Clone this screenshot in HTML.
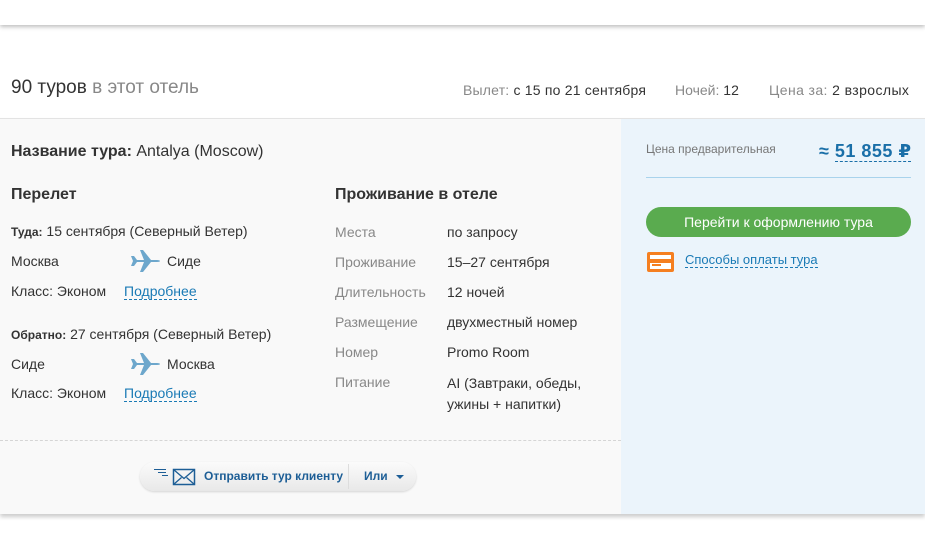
<!DOCTYPE html>
<html><head><meta charset="utf-8"><style>
*{margin:0;padding:0;box-sizing:border-box}
body{width:925px;height:534px;background:#fff;font-family:"Liberation Sans","DejaVu Sans",sans-serif;color:#333;position:relative;overflow:hidden}
.topbar{position:absolute;left:0;top:0;width:925px;height:25px;background:#fff;box-shadow:0 2px 4px rgba(0,0,0,.25)}
.a{position:absolute;white-space:nowrap}
.g{color:#888}
.card{position:absolute;left:0;top:118px;width:925px;height:396px;background:#f9f9f9;border-top:1px solid #e3e3e3;box-shadow:0 3px 4px rgba(0,0,0,.2)}
.right{position:absolute;left:621px;top:0;width:304px;height:395px;background:#ebf4fb}
.lnk{color:#1a7ab5;border-bottom:1px dashed #1a7ab5;line-height:15px}
</style></head><body>
<div class="topbar"></div>
<div class="a" style="left:11px;top:77px;font-size:19px">90 туров <span class="g">в этот отель</span></div>
<div class="a" style="left:463px;top:82px;font-size:14px;letter-spacing:.2px"><span class="g">Вылет:</span> с 15 по 21 сентября</div>
<div class="a" style="left:675px;top:82px;font-size:14px"><span class="g">Ночей:</span> 12</div>
<div class="a" style="left:769px;top:82px;font-size:14px;letter-spacing:.4px"><span class="g">Цена за:</span> 2 взрослых</div>
<div class="card">
<div class="right">
 <div class="a" style="left:25px;top:23px;font-size:12px;color:#777">Цена предварительная</div>
 <div class="a" style="left:198px;top:22px;font-size:18px;font-weight:bold;color:#1a6fa8;letter-spacing:.5px">≈ <span style="border-bottom:1px dashed #1a6fa8">51 855 ₽</span></div>
 <div class="a" style="left:25px;top:58px;width:265px;height:1px;background:#a9d3ec"></div>
 <div class="a" style="left:25px;top:88px;width:265px;height:30px;border-radius:15px;background:#5aab4f;color:#fff;font-size:14px;text-align:center;line-height:30px">Перейти к оформлению тура</div>
 <div class="a" style="left:26px;top:133px;width:27px;height:20px;background:#f57f20;border-radius:2px"><div style="position:absolute;left:3px;top:3px;width:21px;height:4px;background:#fff"></div><div style="position:absolute;left:3px;top:11px;width:21px;height:6px;background:#fff"></div><div style="position:absolute;left:5px;top:12px;width:9px;height:2px;background:#f57f20"></div></div>
 <div class="a lnk" style="left:64px;top:133px;font-size:13px">Способы оплаты тура</div>
</div>
<div class="a" style="left:11px;top:24px;font-size:16px"><b>Название тура:</b> Antalya (Moscow)</div>
<div class="a" style="left:11px;top:67px;font-size:16px;font-weight:bold">Перелет</div>
<div class="a" style="left:11px;top:104px;font-size:14px"><b style="font-size:12px">Туда:</b> 15 сентября (Северный Ветер)</div>
<div class="a" style="left:11px;top:134px;font-size:14px">Москва</div>
<svg class="a" style="left:130px;top:130px" width="30" height="24" viewBox="0 0 30 24"><path fill="#6da7cc" d="M1 7h3l3 4h7L10 1h3l8 10h6c2 0 3 .5 3 1s-1 1-3 1h-6l-8 10h-3l4-10H7l-3 4H1l2-5z"/></svg>
<div class="a" style="left:167px;top:134px;font-size:14px">Сиде</div>
<div class="a" style="left:11px;top:164px;font-size:14px">Класс: Эконом</div>
<div class="a lnk" style="left:124px;top:165px;font-size:14px">Подробнее</div>
<div class="a" style="left:11px;top:207px;font-size:14px"><b style="font-size:12px">Обратно:</b> 27 сентября (Северный Ветер)</div>
<div class="a" style="left:11px;top:237px;font-size:14px">Сиде</div>
<svg class="a" style="left:130px;top:233px" width="30" height="24" viewBox="0 0 30 24"><path fill="#6da7cc" d="M1 7h3l3 4h7L10 1h3l8 10h6c2 0 3 .5 3 1s-1 1-3 1h-6l-8 10h-3l4-10H7l-3 4H1l2-5z"/></svg>
<div class="a" style="left:167px;top:237px;font-size:14px">Москва</div>
<div class="a" style="left:11px;top:266px;font-size:14px">Класс: Эконом</div>
<div class="a lnk" style="left:124px;top:267px;font-size:14px">Подробнее</div>
<div class="a" style="left:335px;top:67px;font-size:16px;font-weight:bold">Проживание в отеле</div>
<div class="a g" style="left:335px;top:98px;font-size:14px;line-height:30px">Места<br>Проживание<br>Длительность<br>Размещение<br>Номер<br>Питание</div>
<div class="a" style="left:447px;top:98px;font-size:14px;line-height:30px">по запросу<br>15–27 сентября<br>12 ночей<br>двухместный номер<br>Promo Room</div>
<div class="a" style="left:447px;top:254px;font-size:14px;line-height:21px">AI (Завтраки, обеды,<br>ужины + напитки)</div>
<div class="a" style="left:0;top:321px;width:621px;border-top:1px dashed #d5d5d5"></div>
<div class="a" style="left:140px;top:343px;width:276px;height:29px;border-radius:15px;background:linear-gradient(#fbfbfb,#e8e8e8);box-shadow:0 1px 2px rgba(0,0,0,.15)">
 <svg class="a" style="left:14px;top:6px" width="42" height="18" viewBox="0 0 42 18"><path stroke="#1d5e96" stroke-width="1" fill="none" d="M0 1.5h12M4 4.5h8M8 7.5h6"/><rect x="19.5" y="1.5" width="21" height="15" fill="none" stroke="#1d5e96" stroke-width="1.5"/><path d="M19.5 1.5l10.5 9 10.5-9M19.5 16.5l8-7M40.5 16.5l-8-7" fill="none" stroke="#1d5e96" stroke-width="1.3"/></svg>
 <div class="a" style="left:64px;top:7px;font-size:12px;font-weight:bold;color:#1d5e96">Отправить тур клиенту</div>
 <div class="a" style="left:208px;top:2px;width:1px;height:25px;background:#ddd"></div>
 <div class="a" style="left:224px;top:7px;font-size:12px;font-weight:bold;color:#1d5e96">Или</div>
 <div class="a" style="left:256px;top:13px;border:4px solid transparent;border-top:4px solid #1d5e96;border-bottom:0"></div>
</div>
</div>
</body></html>
